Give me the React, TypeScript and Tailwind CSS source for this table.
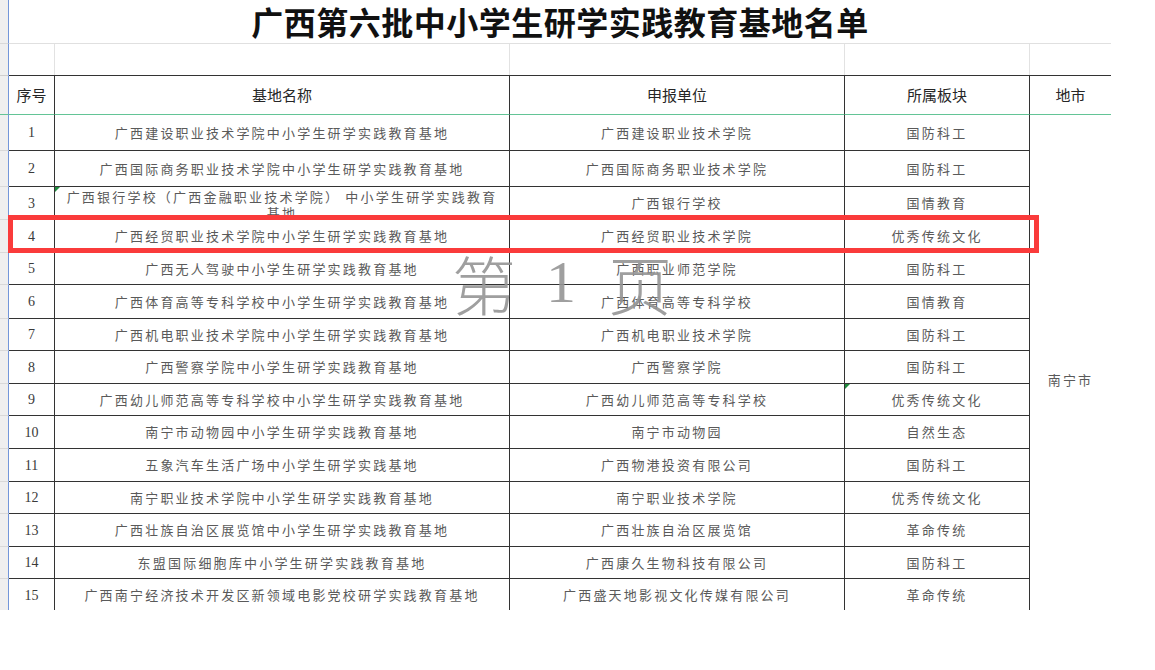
import React from "react";

type Row = {
  no: string;
  name: React.ReactNode;
  unit: string;
  cat: string;
  h: string;
  mark2?: boolean;
  mark4?: boolean;
};

const rows: Row[] = [
  { no: "1", name: "广西建设职业技术学院中小学生研学实践教育基地", unit: "广西建设职业技术学院", cat: "国防科工", h: "h-[36px]" },
  { no: "2", name: "广西国际商务职业技术学院中小学生研学实践教育基地", unit: "广西国际商务职业技术学院", cat: "国防科工", h: "h-[36px]" },
  {
    no: "3",
    name: (
      <div className="self-start pt-[2px] leading-[16px] text-center whitespace-nowrap">
        广西银行学校（广西金融职业技术学院） 中小学生研学实践教育
        <br />
        基地
      </div>
    ),
    unit: "广西银行学校",
    cat: "国情教育",
    h: "h-[33px]",
    mark2: true,
  },
  { no: "4", name: "广西经贸职业技术学院中小学生研学实践教育基地", unit: "广西经贸职业技术学院", cat: "优秀传统文化", h: "h-[33px]" },
  { no: "5", name: "广西无人驾驶中小学生研学实践教育基地", unit: "广西职业师范学院", cat: "国防科工", h: "h-[32px]" },
  { no: "6", name: "广西体育高等专科学校中小学生研学实践教育基地", unit: "广西体育高等专科学校", cat: "国情教育", h: "h-[34px]" },
  { no: "7", name: "广西机电职业技术学院中小学生研学实践教育基地", unit: "广西机电职业技术学院", cat: "国防科工", h: "h-[32px]" },
  { no: "8", name: "广西警察学院中小学生研学实践教育基地", unit: "广西警察学院", cat: "国防科工", h: "h-[33px]" },
  { no: "9", name: "广西幼儿师范高等专科学校中小学生研学实践教育基地", unit: "广西幼儿师范高等专科学校", cat: "优秀传统文化", h: "h-[32px]", mark4: true },
  { no: "10", name: "南宁市动物园中小学生研学实践教育基地", unit: "南宁市动物园", cat: "自然生态", h: "h-[33px]" },
  { no: "11", name: "五象汽车生活广场中小学生研学实践基地", unit: "广西物港投资有限公司", cat: "国防科工", h: "h-[33px]" },
  { no: "12", name: "南宁职业技术学院中小学生研学实践教育基地", unit: "南宁职业技术学院", cat: "优秀传统文化", h: "h-[32px]" },
  { no: "13", name: "广西壮族自治区展览馆中小学生研学实践教育基地", unit: "广西壮族自治区展览馆", cat: "革命传统", h: "h-[33px]" },
  { no: "14", name: "东盟国际细胞库中小学生研学实践教育基地", unit: "广西康久生物科技有限公司", cat: "国防科工", h: "h-[32px]" },
  { no: "15", name: "广西南宁经济技术开发区新领域电影党校研学实践教育基地", unit: "广西盛天地影视文化传媒有限公司", cat: "革命传统", h: "h-[33px]" },
];

const cjk = "font-['Noto_Sans_CJK_SC','Noto_Sans',sans-serif]";

function Mark() {
  return (
    <span className="absolute left-0 top-0 w-0 h-0 border-t-[5px] border-r-[5px] border-t-[#1e8a3c] border-r-transparent" />
  );
}

function Gutter({ h, extra = "" }: { h: string; extra?: string }) {
  return (
    <div
      className={`w-[9px] shrink-0 bg-[#efefef] border-r border-r-[#7396d9] border-b border-b-[#d9d9d9] ${h} ${extra}`}
    />
  );
}

export default function App() {
  return (
    <div className={`relative w-[1155px] h-[670px] bg-white overflow-hidden ${cjk}`}>
      <div className="w-[1111px] h-[610px] overflow-hidden flex flex-col">
        {/* title row */}
        <div className="flex">
          <Gutter h="h-[44px]" />
          <div className="w-[1102px] h-[44px] border-b border-[#e0e0e0] flex items-center justify-center pb-[2px]">
            <span className="text-[32px] font-bold text-[#111] leading-none tracking-[0.5px]">
              广西第六批中小学生研学实践教育基地名单
            </span>
          </div>
        </div>
        {/* empty row */}
        <div className="flex">
          <Gutter h="h-[31px]" extra="border-b-0" />
          <div className="w-[46px] h-[31px] border-r border-[#e2e2e2]" />
          <div className="w-[455px] h-[31px] border-r border-[#e2e2e2]" />
          <div className="w-[335px] h-[31px] border-r border-[#e2e2e2]" />
          <div className="w-[185px] h-[31px] border-r border-[#e2e2e2]" />
          <div className="w-[81px] h-[31px]" />
        </div>
        {/* body */}
        <div className="flex">
          <div className="flex flex-col">
            {/* header */}
            <div className="flex text-[15px] text-[#262626]">
              <div className="w-[9px] h-[40px] bg-[#efefef] border-r border-r-[#7396d9] border-t border-t-[#cfcfcf] border-b border-b-[#63c496]" />
              <div className="w-[46px] h-[40px] border-t border-t-[#333] border-b border-b-[#63c496] border-r border-r-[#333] flex items-center justify-center">
                序号
              </div>
              <div className="w-[455px] h-[40px] border-t border-t-[#333] border-b border-b-[#63c496] border-r border-r-[#333] flex items-center justify-center">
                基地名称
              </div>
              <div className="w-[335px] h-[40px] border-t border-t-[#333] border-b border-b-[#63c496] border-r border-r-[#333] flex items-center justify-center">
                申报单位
              </div>
              <div className="w-[185px] h-[40px] border-t border-t-[#333] border-b border-b-[#63c496] border-r border-r-[#333] flex items-center justify-center">
                所属板块
              </div>
            </div>
            {/* data rows */}
            {rows.map((r) => (
              <div key={r.no} className="flex text-[13px] text-[#5a5a5a] tracking-[2.2px]">
                <Gutter h={r.h} />
                <div
                  className={`w-[46px] ${r.h} border-r border-b border-[#333] flex items-center justify-center font-['Liberation_Serif',serif] text-[14px] text-[#3a3a3a] tracking-normal`}
                >
                  {r.no}
                </div>
                <div
                  className={`relative w-[455px] ${r.h} border-r border-b border-[#333] flex items-center justify-center overflow-hidden whitespace-nowrap`}
                >
                  {r.mark2 && <Mark />}
                  {r.name}
                </div>
                <div
                  className={`w-[335px] ${r.h} border-r border-b border-[#333] flex items-center justify-center whitespace-nowrap`}
                >
                  {r.unit}
                </div>
                <div
                  className={`relative w-[185px] ${r.h} border-r border-b border-[#333] flex items-center justify-center whitespace-nowrap`}
                >
                  {r.mark4 && <Mark />}
                  {r.cat}
                </div>
              </div>
            ))}
          </div>
          {/* city column (merged) */}
          <div className="flex flex-col w-[81px]">
            <div className="h-[40px] border-t border-t-[#333] border-b border-b-[#63c496] flex items-center justify-center text-[15px] text-[#262626]">
              地市
            </div>
            <div className="h-[530px] shrink-0 flex items-center justify-center text-[13px] text-[#5a5a5a] tracking-[2.2px]">
              南宁市
            </div>
          </div>
        </div>
      </div>

      {/* highlight rectangle */}
      <div className="absolute left-[8px] top-[215px] w-[1031px] h-[38px] border-[5px] border-[#fa3b3b]" />

      {/* page watermark */}
      <div className="absolute left-[452px] top-[250px] flex items-center text-[#959595] opacity-90 pointer-events-none">
        <span className="text-[64px] leading-none font-light">第</span>
        <span className="ml-[30px] text-[60px] leading-none font-['Liberation_Serif',serif]">1</span>
        <span className="ml-[32px] text-[64px] leading-none font-light">页</span>
      </div>
    </div>
  );
}
